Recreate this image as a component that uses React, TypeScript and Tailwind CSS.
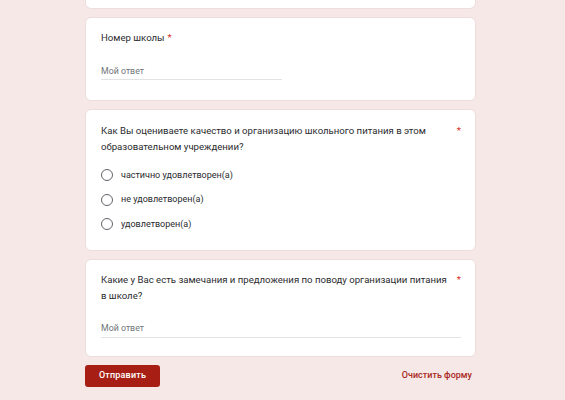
import { ReactNode } from 'react';

const font = { fontFamily: 'Roboto, "Noto Sans", Arial, sans-serif' };

function Card({ children, className = '' }: { children: ReactNode; className?: string }) {
  return (
    <div className={`bg-white rounded-[6px] border border-[#eddedd] ${className}`}>
      {children}
    </div>
  );
}

// question title with the required asterisk pinned to the right of the text block
function Title({ text, grow = true }: { text: string; grow?: boolean }) {
  return (
    <div className="flex items-start text-[9.6px] leading-[16px] text-[#2a2b2e]">
      <div className={grow ? 'flex-1' : ''}>{text}</div>
      <span className="ml-[3px] text-[#d93025]">*</span>
    </div>
  );
}

function Radio({ label }: { label: string }) {
  return (
    <div className="flex items-center h-[24.5px]">
      <span className="w-[12px] h-[12px] rounded-full border-[1.4px] border-[#5f6368] shrink-0" />
      <span className="ml-[8px] text-[9px] text-[#2a2b2e]">{label}</span>
    </div>
  );
}

export default function App() {
  const options = ['частично удовлетворен(а)', 'не удовлетворен(а)', 'удовлетворен(а)'];

  return (
    <div className="w-[565px] h-[400px] overflow-hidden bg-[#f6e8e7]" style={font}>
      <div className="w-[391px] ml-[85px] flex flex-col gap-[8px]">
        <div className="h-[9px] bg-white rounded-b-[6px] border border-t-0 border-[#eddedd]" />

        <Card className="h-[84px] pt-[12px] pl-[15px] pr-[15px]">
          <Title text="Номер школы" grow={false} />
          <div className="mt-[18px] w-[181px] border-b border-[#e3e3e3] pb-[1px] text-[8.8px] leading-[14px] text-[#70757a]">
            Мой ответ
          </div>
        </Card>

        <Card className="h-[142px] pt-[13px] pl-[15px] pr-[14px]">
          <Title text="Как Вы оцениваете качество и организацию школьного питания в этом образовательном учреждении?" />
          <div className="mt-[8px] flex flex-col">
            {options.map((o) => (
              <Radio key={o} label={o} />
            ))}
          </div>
        </Card>

        <Card className="h-[98px] pt-[12px] pl-[15px] pr-[14px]">
          <Title text="Какие у Вас есть замечания и предложения по поводу организации питания в школе?" />
          <div className="mt-[17px] border-b border-[#e3e3e3] pb-[2px] text-[8.8px] leading-[14px] text-[#70757a]">
            Мой ответ
          </div>
        </Card>

        <div className="flex items-center justify-between pr-[4px]">
          <button className="h-[22px] w-[75px] rounded-[3px] bg-[#a71f14] text-white text-[9px] font-medium tracking-[0.2px]">
            Отправить
          </button>
          <span className="text-[9px] font-medium text-[#a8291d]">Очистить форму</span>
        </div>
      </div>
    </div>
  );
}
